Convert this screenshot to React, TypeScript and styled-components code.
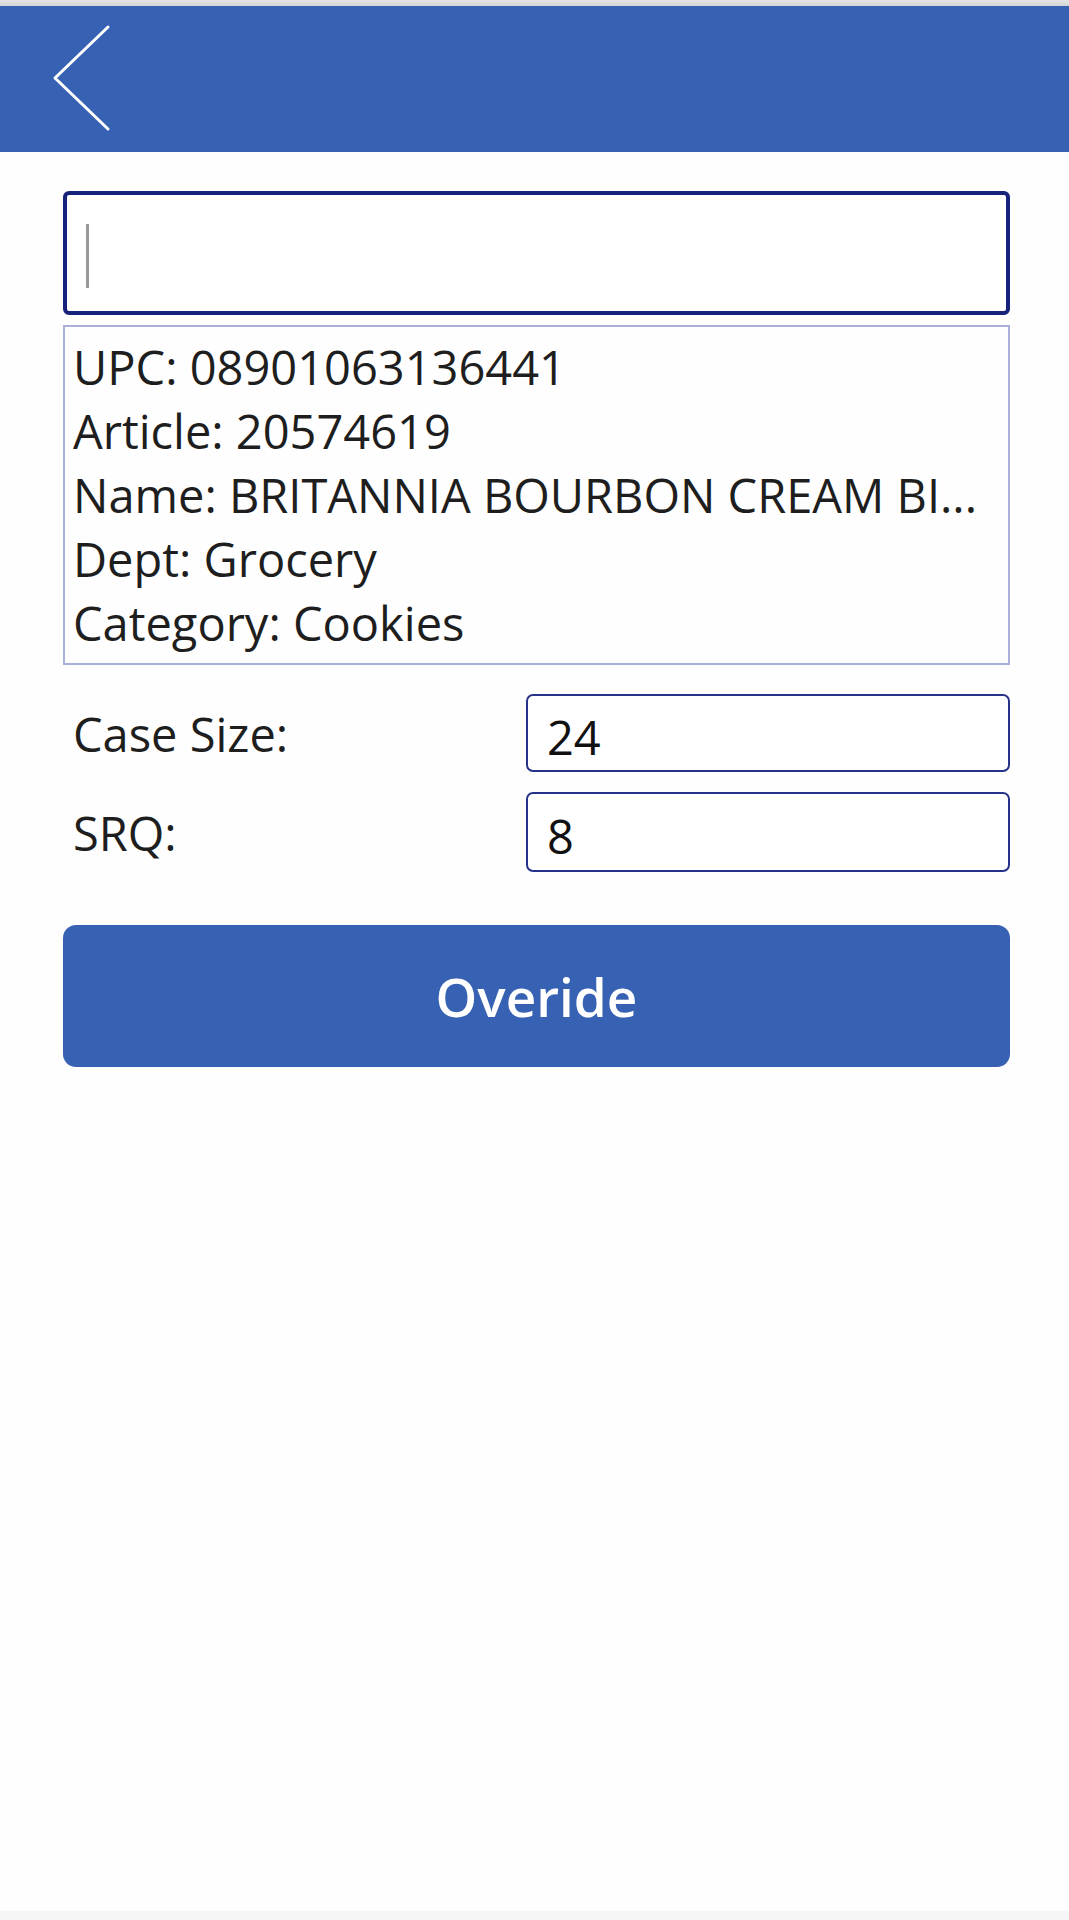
import React from "react";
import styled, { createGlobalStyle } from "styled-components";

const GlobalStyle = createGlobalStyle`
  html, body {
    margin: 0;
    padding: 0;
    background: #ffffff;
  }
  body {
    font-family: "Open Sans", "Noto Sans", Arial, sans-serif;
    color: #222222;
  }
  * { box-sizing: border-box; }
`;

const Screen = styled.div`
  display: flex;
  flex-direction: column;
  min-height: 100vh;
  background: #fefefe;
`;

const TopBand = styled.div`
  height: 6px;
  background: linear-gradient(#e4e4e4, #d6d6d6);
`;

const Header = styled.header`
  height: 146px;
  background: #3761b2;
  display: flex;
  align-items: center;
  padding-left: 52px;
`;

const BackButton = styled.button`
  width: 62px;
  height: 110px;
  padding: 0;
  border: none;
  background: transparent;
  display: flex;
  align-items: center;
  justify-content: center;
  cursor: pointer;
`;

const Content = styled.main`
  display: flex;
  flex-direction: column;
  padding: 39px 59px 0 63px;
`;

const SearchBox = styled.div`
  height: 124px;
  border: 4px solid #17237a;
  border-radius: 6px;
  background: #ffffff;
  display: flex;
  align-items: center;
  padding-left: 19px;
  padding-top: 6px;
`;

const Caret = styled.span`
  width: 3px;
  height: 64px;
  background: #9a9a9a;
`;

const InfoBox = styled.div`
  margin-top: 10px;
  height: 340px;
  border: 2px solid #aab0d8;
  padding: 8px 8px 0 8px;
  display: flex;
  flex-direction: column;
`;

const InfoLine = styled.div`
  font-size: 47px;
  line-height: 64px;
  white-space: nowrap;
  overflow: hidden;
  color: #1e1e1e;
`;

const FieldList = styled.div`
  margin-top: 29px;
  display: flex;
  flex-direction: column;
  gap: 20px;
`;

const FieldRow = styled.div<{ $h: number }>`
  display: flex;
  align-items: center;
  height: ${(p) => p.$h}px;
`;

const FieldLabel = styled.div`
  flex: 1;
  padding: 2px 0 0 10px;
  font-size: 47px;
  color: #1e1e1e;
`;

const FieldInput = styled.div`
  width: 484px;
  height: 100%;
  border: 2.5px solid #27338a;
  border-radius: 7px;
  background: #ffffff;
  display: flex;
  align-items: center;
  padding: 8px 0 0 19px;
  font-size: 47px;
  color: #111111;
`;

const PrimaryButton = styled.button`
  margin-top: 53px;
  height: 142px;
  border: none;
  border-radius: 13px;
  background: #3761b2;
  color: #ffffff;
  font-family: "Open Sans", "Noto Sans", Arial, sans-serif;
  font-size: 53px;
  font-weight: 600;
  cursor: pointer;
`;

const Spacer = styled.div`
  flex: 1;
`;

const BottomStrip = styled.div`
  height: 9px;
  background: #f6f6f6;
`;

const info = [
  "UPC: 08901063136441",
  "Article: 20574619",
  "Name: BRITANNIA BOURBON CREAM BI...",
  "Dept: Grocery",
  "Category: Cookies",
];

const fields = [
  { label: "Case Size:", value: "24", h: 78 },
  { label: "SRQ:", value: "8", h: 80 },
];

export default function App() {
  return (
    <>
      <GlobalStyle />
      <Screen>
        <TopBand />
        <Header>
          <BackButton aria-label="Back">
            <svg width="62" height="110" viewBox="0 0 62 110" fill="none">
              <path
                d="M56 3 L3 54 L56 105"
                stroke="#ffffff"
                strokeWidth="3"
                strokeLinecap="round"
                strokeLinejoin="round"
              />
            </svg>
          </BackButton>
        </Header>
        <Content>
          <SearchBox>
            <Caret />
          </SearchBox>
          <InfoBox>
            {info.map((line) => (
              <InfoLine key={line}>{line}</InfoLine>
            ))}
          </InfoBox>
          <FieldList>
            {fields.map((f) => (
              <FieldRow key={f.label} $h={f.h}>
                <FieldLabel>{f.label}</FieldLabel>
                <FieldInput>{f.value}</FieldInput>
              </FieldRow>
            ))}
          </FieldList>
          <PrimaryButton>Overide</PrimaryButton>
        </Content>
        <Spacer />
        <BottomStrip />
      </Screen>
    </>
  );
}
